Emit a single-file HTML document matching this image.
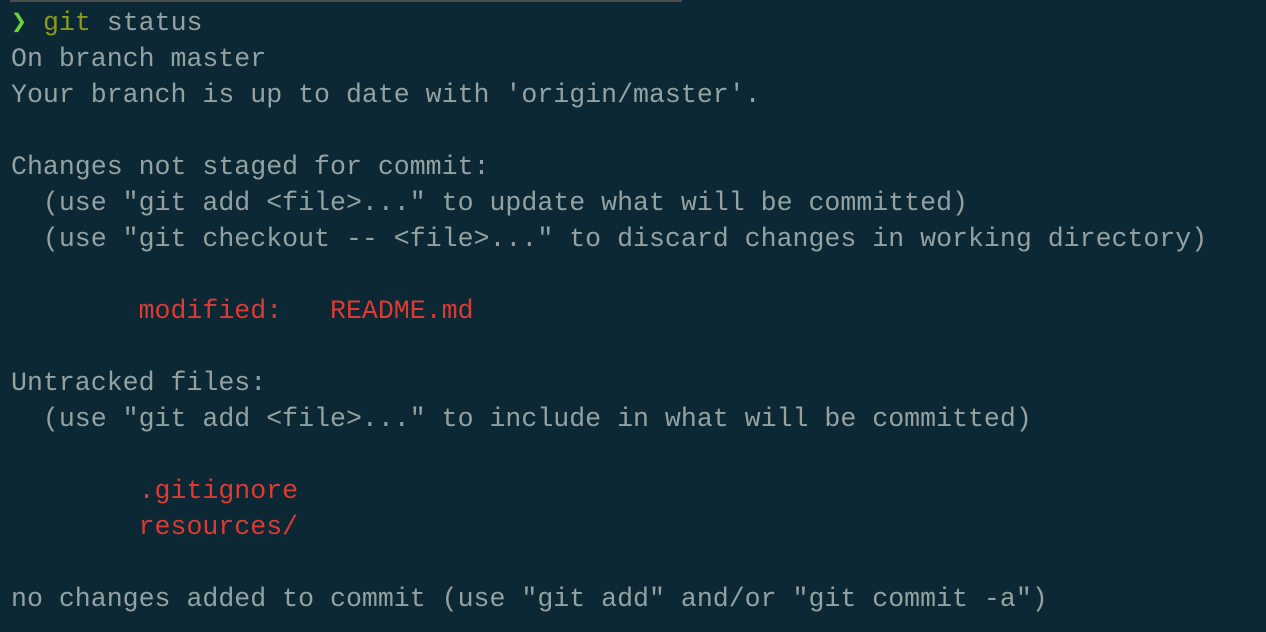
<!DOCTYPE html>
<html><head><meta charset="utf-8"><style>
html,body{margin:0;padding:0;background:#0b2834;width:1266px;height:632px;overflow:hidden}
.bar{position:absolute;left:10px;top:0;width:672px;height:2px;background:#4b4b4b}
pre{position:absolute;left:11px;top:5px;margin:0;font-family:"Liberation Mono",monospace;font-size:26.58px;line-height:36px;color:#93a1a1}
.r{color:#dc3a32}.g{color:#6bd13a}.y{color:#8a9a1c}
</style></head><body><div class="bar"></div>
<pre><span class="g">❯</span> <span class="y">git</span> status
On branch master
Your branch is up to date with 'origin/master'.

Changes not staged for commit:
  (use "git add &lt;file&gt;..." to update what will be committed)
  (use "git checkout -- &lt;file&gt;..." to discard changes in working directory)

        <span class="r">modified:   README.md</span>

Untracked files:
  (use "git add &lt;file&gt;..." to include in what will be committed)

        <span class="r">.gitignore</span>
        <span class="r">resources/</span>

no changes added to commit (use "git add" and/or "git commit -a")</pre>
</body></html>
